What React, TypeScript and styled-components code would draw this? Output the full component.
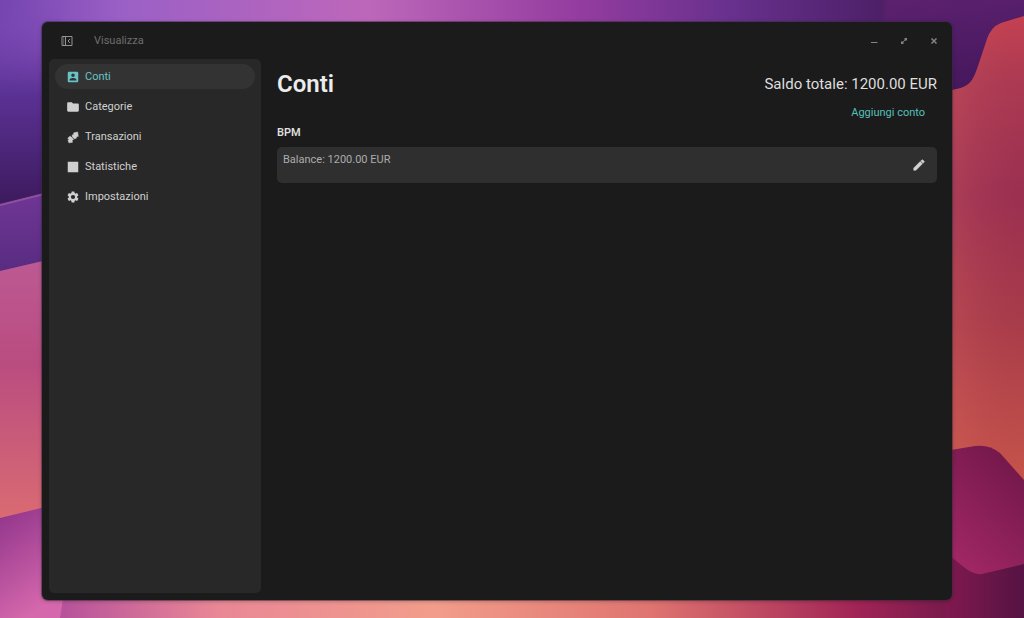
import React, { useState } from "react";
import styled, { createGlobalStyle } from "styled-components";

const GlobalStyle = createGlobalStyle`
  *, *::before, *::after { box-sizing: border-box; }
  body {
    margin: 0;
    background: #4a1a66;
    color: #d2d2d2;
    font-family: Roboto, "Noto Sans", sans-serif;
    font-size: 11px;
    line-height: 16px;
  }
  button { font: inherit; color: inherit; border: 0; background: none; padding: 0; cursor: pointer; }
  svg { display: block; }
`;

const Desktop = styled.div`
  position: relative;
  display: flex;
  min-height: 100vh;
  padding: 22px 72px 18px 42px;
`;

const Backdrop = styled.svg`
  position: absolute;
  inset: 0;
  width: 100%;
  height: 100%;
`;

const AppWindow = styled.div`
  position: relative;
  flex: 1;
  display: flex;
  flex-direction: column;
  min-width: 0;
  border-radius: 6px;
  background: #1b1b1b;
  box-shadow: 0 0 0 1px rgba(60, 45, 65, 0.5), 0 1px 4px rgba(0, 0, 0, 0.3);
`;

const TitleBar = styled.header`
  display: flex;
  align-items: center;
  height: 37px;
  padding: 0 12px 0 18px;
  color: #6e6e6e;
`;

const IconButton = styled.button<{ $size: number }>`
  display: flex;
  align-items: center;
  justify-content: center;
  width: ${(p) => p.$size}px;
  height: ${(p) => p.$size}px;
`;

const MenuButton = styled.button`
  margin-left: 20px;
`;

const WindowControls = styled.div`
  display: flex;
  gap: 18px;
  margin-left: auto;
  color: #858585;
`;

const Body = styled.div`
  flex: 1;
  display: flex;
`;

const Sidebar = styled.nav`
  display: flex;
  flex-direction: column;
  gap: 5px;
  width: 212px;
  margin: 0 0 7px 7px;
  padding: 5px 6px;
  border-radius: 5px;
  background: #282828;
`;

const NavItem = styled.button<{ $active: boolean }>`
  display: flex;
  align-items: center;
  gap: 5px;
  height: 25px;
  padding: 0 11px;
  border-radius: 13px;
  text-align: left;
  background: ${(p) => (p.$active ? "#333333" : "transparent")};
  color: ${(p) => (p.$active ? "#68c3c7" : "#d0d0d0")};
`;

const Content = styled.main`
  flex: 1;
  display: flex;
  flex-direction: column;
  padding: 9px 15px 16px 16px;
`;

const PageHeader = styled.div`
  display: flex;
  align-items: center;
  justify-content: space-between;
`;

const Title = styled.h1`
  margin: 0;
  color: #ececec;
  font-size: 24px;
  line-height: 32px;
  font-weight: 600;
`;

const Total = styled.p`
  margin: 0;
  color: #dedede;
  font-size: 15px;
  line-height: 32px;
`;

const AddButton = styled.button`
  align-self: flex-end;
  margin: 5px 0 4px;
  padding: 0 12px;
  color: #55c0ba;
`;

const AccountName = styled.h2`
  margin: 0 0 6px;
  color: #dedede;
  font-size: 11px;
  line-height: 16px;
  font-weight: 600;
`;

const AccountCard = styled.section`
  display: flex;
  align-items: center;
  justify-content: space-between;
  height: 36px;
  padding: 0 11px 0 6px;
  border-radius: 5px;
  background: #2f2f2f;
`;

const Balance = styled.p`
  align-self: flex-start;
  margin: 0;
  padding-top: 5px;
  color: #acacac;
`;

const Wallpaper = () => (
  <Backdrop viewBox="0 0 1024 618" preserveAspectRatio="none" aria-hidden="true">
    <defs>
      <linearGradient id="sky">
        <stop offset="0" stopColor="#7444b0" />
        <stop offset=".12" stopColor="#9b60c6" />
        <stop offset=".36" stopColor="#bd67ba" />
        <stop offset=".56" stopColor="#953da0" />
        <stop offset=".72" stopColor="#66308c" />
        <stop offset=".86" stopColor="#4d2068" />
        <stop offset=".87" stopColor="#622066" />
        <stop offset="1" stopColor="#3a1342" />
      </linearGradient>
      <linearGradient id="left" x2="0" y2="1">
        <stop offset="0" stopColor="#8451b8" stopOpacity="0" />
        <stop offset=".12" stopColor="#7a48b2" stopOpacity=".3" />
        <stop offset=".45" stopColor="#5b3295" />
        <stop offset="1" stopColor="#3d1a5d" />
      </linearGradient>
      <linearGradient id="band" x2="0" y2="1">
        <stop offset="0" stopColor="#713796" />
        <stop offset="1" stopColor="#572b80" />
      </linearGradient>
      <linearGradient id="rose" x2="0" y2="1">
        <stop offset="0" stopColor="#bd5a94" />
        <stop offset=".4" stopColor="#b94c80" />
        <stop offset="1" stopColor="#da6b72" />
      </linearGradient>
      <linearGradient id="orchid" x1="0" y1="0" x2=".4" y2="1">
        <stop offset="0" stopColor="#8c3189" />
        <stop offset="1" stopColor="#d568ac" />
      </linearGradient>
      <linearGradient id="floor">
        <stop offset="0" stopColor="#b04b9c" />
        <stop offset=".18" stopColor="#e98796" />
        <stop offset=".4" stopColor="#f29d8b" />
        <stop offset=".62" stopColor="#df7470" />
        <stop offset=".83" stopColor="#a12456" />
        <stop offset="1" stopColor="#551343" />
      </linearGradient>
      <linearGradient id="plum" x2=".2" y2="1">
        <stop offset="0" stopColor="#5c2170" />
        <stop offset="1" stopColor="#44175b" />
      </linearGradient>
      <linearGradient id="coral" x2="0" y2="1">
        <stop offset="0" stopColor="#cb4352" />
        <stop offset=".13" stopColor="#b03c53" />
        <stop offset=".38" stopColor="#9c3052" />
        <stop offset=".65" stopColor="#ac3e4a" />
        <stop offset="1" stopColor="#ce5a4a" />
      </linearGradient>
      <linearGradient id="glow">
        <stop offset="0" stopColor="#d76465" stopOpacity=".3" />
        <stop offset="1" stopColor="#8c2848" stopOpacity=".1" />
      </linearGradient>
      <linearGradient id="berry" x1=".8" y1="0" x2=".2" y2="1">
        <stop offset="0" stopColor="#711749" />
        <stop offset="1" stopColor="#a32865" />
      </linearGradient>
      <linearGradient id="wine">
        <stop offset="0" stopColor="#81194f" />
        <stop offset="1" stopColor="#551343" />
      </linearGradient>
    </defs>
    <path d="M0 0H1024V210H0Z" fill="url(#sky)" />
    <path d="M0 0H60V205H0Z" fill="url(#left)" />
    <path d="M0 205 60 190V275H0Z" fill="url(#band)" />
    <path d="M0 205 60 190" stroke="#91509f" strokeWidth="2" />
    <path d="M0 271 60 257V520H0Z" fill="url(#rose)" />
    <path d="M40 580H1024V618H40Z" fill="url(#floor)" />
    <path d="M0 518 66 502V580L60 618H0Z" fill="url(#orchid)" />
    <path d="M888 0H1024V100H940V22H885Z" fill="url(#plum)" />
    <path d="M945 91C966 88 971 86 977 69L987 39Q991 27 1001 23L1024 16V490H945Z" fill="url(#coral)" />
    <path d="M945 91C966 88 971 86 977 69L987 39Q991 27 1001 23L1024 16V490H945Z" fill="url(#glow)" />
    <path d="M945 540H1024V618H945Z" fill="url(#wine)" />
    <path d="M945 451 975 446Q989 444 1000 453L1024 480V564L982 574Q974 575 965 568L945 552Z" fill="url(#berry)" />
  </Backdrop>
);

const iconPaths = {
  account:
    "M19 3H5a2 2 0 0 0-2 2v14a2 2 0 0 0 2 2h14a2 2 0 0 0 2-2V5a2 2 0 0 0-2-2Zm-7 3a3 3 0 1 1 0 6 3 3 0 0 1 0-6Zm6 12H6v-1c0-2 4-3.100 6-3.100s6 1.100 6 3.100Z",
  folder: "M10 4H4c-1.100 0-2 .9-2 2v12c0 1.100.9 2 2 2h16c1.100 0 2-.9 2-2V8c0-1.100-.9-2-2-2h-8Z",
  transfer: "M13 5 20 3.500 21 11 18.500 10.500 17.500 14 14.500 15 11 12 10.500 8.500 14 7.500ZM3 14 7 10.500 9 12 13 16 10.500 17.500 11 21 5 22 3.500 17.500 5 16Z",
  square: "M3 3h18v18H3Z",
  gear:
    "M19.140 12.940c.04-.3.060-.61.060-.94s-.02-.64-.07-.94l2.030-1.580a.49.490 0 0 0 .12-.61l-1.920-3.320a.49.490 0 0 0-.59-.22l-2.390.96a7 7 0 0 0-1.620-.94l-.36-2.540A.48.480 0 0 0 13.920 2.400h-3.840a.47.470 0 0 0-.47.410l-.36 2.540c-.59.240-1.130.57-1.620.94l-2.390-.96a.48.480 0 0 0-.59.220L2.740 8.870a.47.470 0 0 0 .12.610l2.030 1.580c-.05.3-.09.630-.09.940s.02.640.07.940l-2.030 1.580a.49.490 0 0 0-.12.610l1.920 3.320c.12.220.37.290.59.220l2.390-.96c.5.380 1.030.7 1.620.94l.36 2.540c.05.240.24.410.48.410h3.840c.24 0 .44-.17.470-.41l.36-2.540c.59-.24 1.130-.56 1.620-.94l2.390.96c.22.080.47 0 .59-.22l1.920-3.320a.47.470 0 0 0-.12-.61ZM12 15.600a3.600 3.600 0 1 1 0-7.200 3.600 3.600 0 0 1 0 7.200Z",
  pencil:
    "M3 17.250V21h3.750L17.810 9.940l-3.750-3.750ZM20.710 7.040a1 1 0 0 0 0-1.410l-2.340-2.340a1 1 0 0 0-1.410 0l-1.830 1.830 3.750 3.750Z",
};

const Icon = ({ name, size }: { name: keyof typeof iconPaths; size: number }) => (
  <svg width={size} height={size} viewBox="0 0 24 24" fill="currentColor" fillRule="evenodd" aria-hidden="true">
    <path
      d={iconPaths[name]}
      stroke={name === "pencil" || name === "transfer" ? "currentColor" : "none"}
      strokeWidth="1"
      strokeLinejoin="round"
    />
  </svg>
);

const sections: { label: string; icon: keyof typeof iconPaths }[] = [
  { label: "Conti", icon: "account" },
  { label: "Categorie", icon: "folder" },
  { label: "Transazioni", icon: "transfer" },
  { label: "Statistiche", icon: "square" },
  { label: "Impostazioni", icon: "gear" },
];

export default function App() {
  const [active, setActive] = useState("Conti");
  return (
    <>
      <GlobalStyle />
      <Desktop>
        <Wallpaper />
        <AppWindow>
          <TitleBar>
            <IconButton $size={14} aria-label="Barra laterale">
              <svg width="12" height="12" viewBox="0 0 12 12" fill="none" stroke="#929292">
                <path d="M1 1.500H11V10.500H1ZM4.500 1.500V10.500M9 4 7 6 9 8" />
                <path d="M2.700 2V10" strokeOpacity=".5" />
              </svg>
            </IconButton>
            <MenuButton>Visualizza</MenuButton>
            <WindowControls>
              <IconButton $size={12} aria-label="Riduci a icona">
                <svg width="8" height="8" viewBox="0 0 8 8" stroke="currentColor">
                  <path d="M1 5.500H7.500" />
                </svg>
              </IconButton>
              <IconButton $size={12} aria-label="Ingrandisci">
                <svg width="8" height="8" viewBox="0 0 8 8" fill="currentColor">
                  <path d="M4 1H7V4L6 3 4.800 4.200 3.800 3.200 5 2ZM1 4 2 5 3.200 3.800 4.200 4.800 3 6 4 7H1Z" />
                </svg>
              </IconButton>
              <IconButton $size={12} aria-label="Chiudi">
                <svg width="8" height="8" viewBox="0 0 8 8" stroke="currentColor" strokeWidth="1.500">
                  <path d="M1.500 1.500 6.500 6.500M6.500 1.500 1.500 6.500" />
                </svg>
              </IconButton>
            </WindowControls>
          </TitleBar>
          <Body>
            <Sidebar>
              {sections.map(({ label, icon }) => (
                <NavItem key={label} $active={label === active} onClick={() => setActive(label)}>
                  <Icon name={icon} size={14} />
                  {label}
                </NavItem>
              ))}
            </Sidebar>
            <Content>
              <PageHeader>
                <Title>Conti</Title>
                <Total>Saldo totale: 1200.00 EUR</Total>
              </PageHeader>
              <AddButton>Aggiungi conto</AddButton>
              <AccountName>BPM</AccountName>
              <AccountCard>
                <Balance>Balance: 1200.00 EUR</Balance>
                <IconButton $size={14} aria-label="Modifica conto">
                  <Icon name="pencil" size={14} />
                </IconButton>
              </AccountCard>
            </Content>
          </Body>
        </AppWindow>
      </Desktop>
    </>
  );
}
